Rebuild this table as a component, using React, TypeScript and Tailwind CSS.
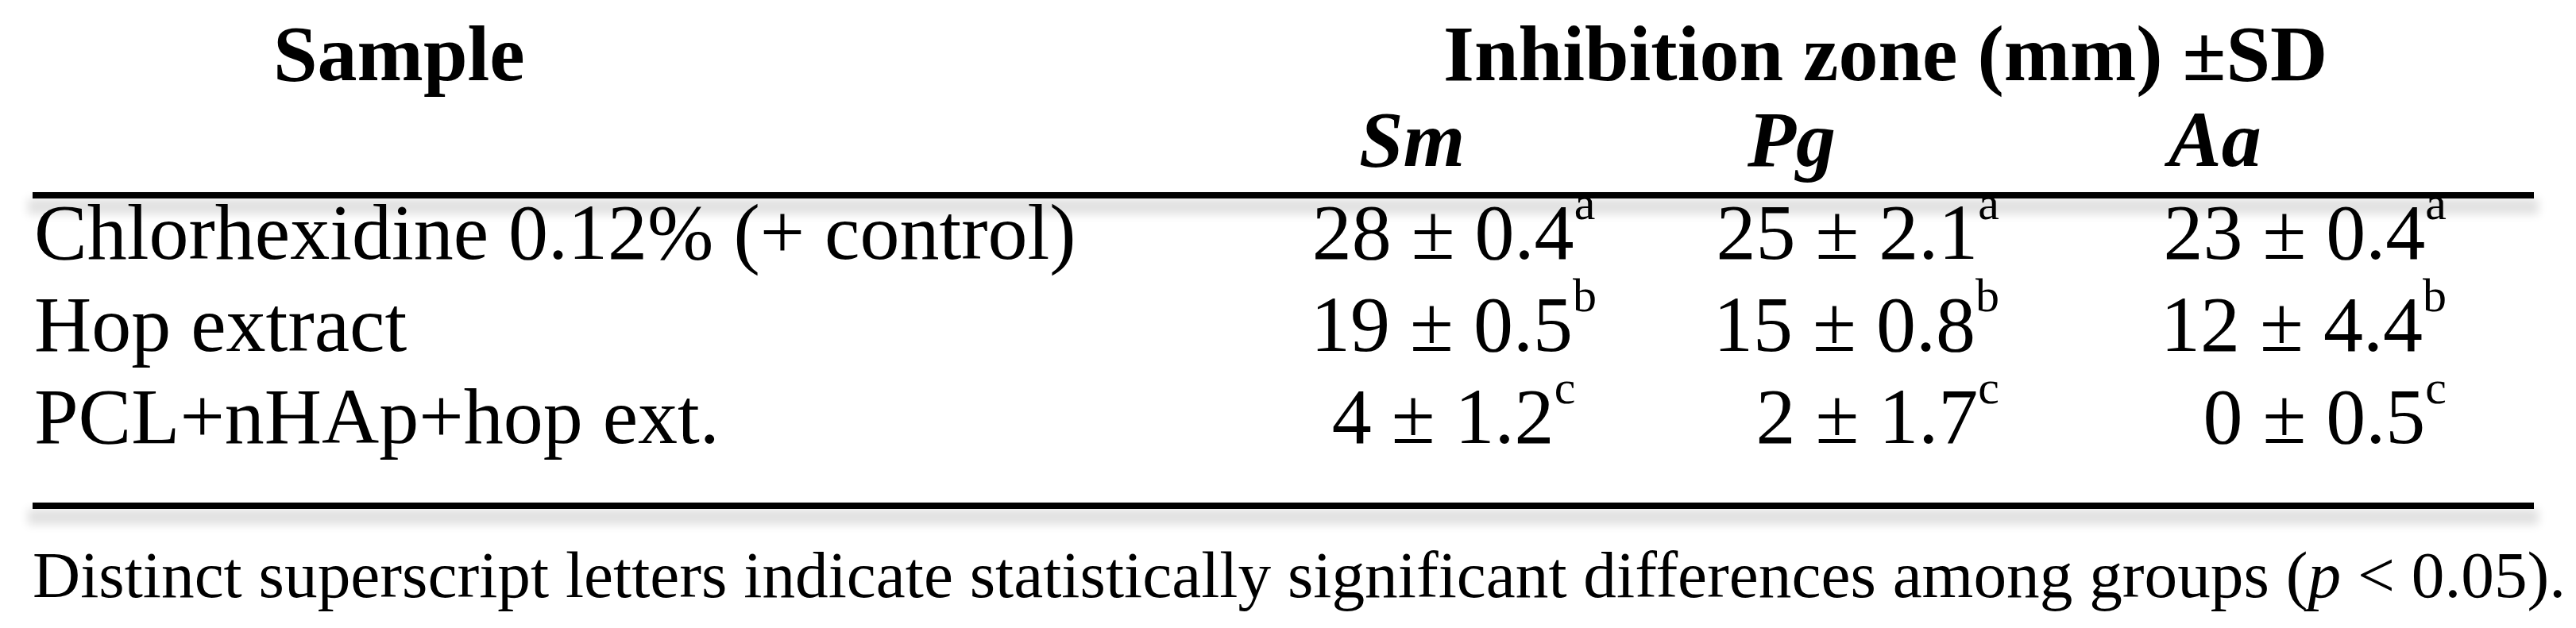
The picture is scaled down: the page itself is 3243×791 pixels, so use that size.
const rows = [
  { name: "Chlorhexidine 0.12% (+ control)", sm: "28 ± 0.4", pg: "25 ± 2.1", aa: "23 ± 0.4", sup: "a" },
  { name: "Hop extract", sm: "19 ± 0.5", pg: "15 ± 0.8", aa: "12 ± 4.4", sup: "b" },
  { name: "PCL+nHAp+hop ext.", sm: "4 ± 1.2", pg: "2 ± 1.7", aa: "0 ± 0.5", sup: "c" },
]

function Value({ v, sup }: { v: string; sup: string }) {
  return (
    <span className="whitespace-nowrap">
      {v}
      <span className="relative -top-[50px] text-[60px] leading-none">{sup}</span>
    </span>
  )
}

export default function App() {
  return (
    <div className="min-h-screen w-full bg-white text-black font-['Liberation_Serif',serif]">
      <div className="pl-[41px] pt-[14px] w-[3190px]">
        {/* header */}
        <div className="grid grid-cols-[1519px_540px_490px_600px] text-[100px] leading-[108px] font-bold">
          <div className="pl-[303px]">Sample</div>
          <div className="col-span-3 pl-[257px] whitespace-nowrap">Inhibition zone (mm) ±SD</div>
          <div></div>
          <div className="pl-[151px] italic">Sm</div>
          <div className="pl-[100px] italic">Pg</div>
          <div className="pl-[140px] italic">Aa</div>
        </div>

        <div className="mt-[12px] h-[8px] bg-black shadow-[0_14px_12px_6px_rgba(0,0,0,0.12)]"></div>

        {/* body */}
        <div className="text-[100px] leading-[86px]">
          {rows.map((r) => (
            <div key={r.name} className="grid grid-cols-[1519px_540px_490px_600px] h-[116px]">
              <div className="pl-[2px] whitespace-nowrap">{r.name}</div>
              <div className="text-center">
                <Value v={r.sm} sup={r.sup} />
              </div>
              <div className="text-right pr-[73px]">
                <Value v={r.pg} sup={r.sup} />
              </div>
              <div className="text-right pr-[110px]">
                <Value v={r.aa} sup={r.sup} />
              </div>
            </div>
          ))}
        </div>

        <div className="mt-[35px] h-[8px] bg-black shadow-[0_14px_12px_6px_rgba(0,0,0,0.12)]"></div>

        <p className="mt-[35px] text-[83.3px] leading-[96px] whitespace-nowrap">
          Distinct superscript letters indicate statistically significant differences among groups (<span className="italic">p</span> &lt; 0.05).
        </p>
      </div>
    </div>
  )
}
